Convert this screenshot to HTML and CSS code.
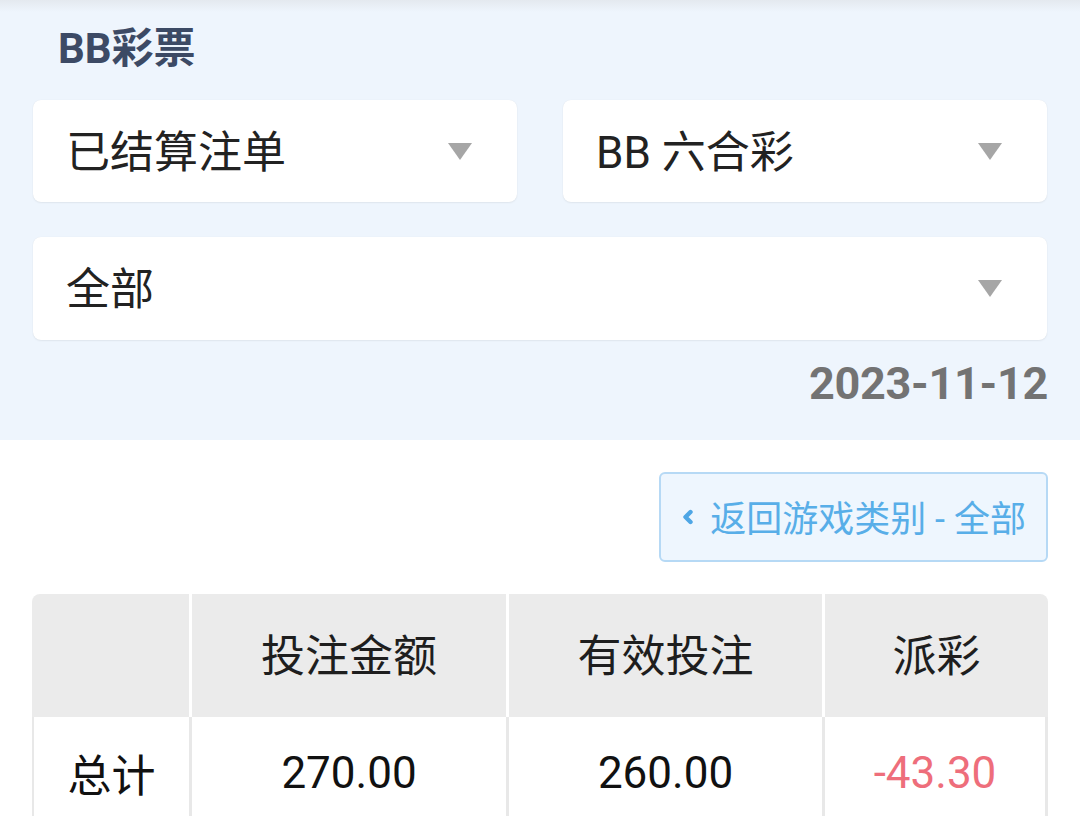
FILE: index.html
```html
<!DOCTYPE html>
<html lang="zh-CN">
<head>
<meta charset="utf-8">
<title>BB彩票</title>
<link rel="stylesheet" href="styles.css">
</head>
<body>
<section class="filters">
  <h1 class="title">BB彩票</h1>
  <div class="select-grid">
    <div class="select"><span>已结算注单</span><i class="caret"></i></div>
    <div class="select"><span>BB 六合彩</span><i class="caret"></i></div>
    <div class="select wide"><span>全部</span><i class="caret"></i></div>
  </div>
  <div class="date">2023-11-12</div>
</section>
<section class="results">
  <div class="back-row">
    <button class="back-btn">
      <svg class="chev" width="12" height="16" viewBox="0 0 12 16"><path d="M8.5 3 L3.5 8 L8.5 13" fill="none" stroke="currentColor" stroke-width="4.4" stroke-linecap="round" stroke-linejoin="round"/></svg>
      <span>返回游戏类别 - 全部</span>
    </button>
  </div>
  <table class="summary">
    <colgroup>
      <col class="c1"><col class="c2"><col class="c3"><col class="c4">
    </colgroup>
    <thead>
      <tr><th></th><th>投注金额</th><th>有效投注</th><th>派彩</th></tr>
    </thead>
    <tbody>
      <tr><td>总计</td><td>270.00</td><td>260.00</td><td class="neg">-43.30</td></tr>
    </tbody>
  </table>
</section>
</body>
</html>
```
FILE: styles.css
```css
html, body {
  margin: 0;
  padding: 0;
  background: #ffffff;
}
body {
  width: 1080px;
  font-family: Roboto, "Noto Sans CJK SC", sans-serif;
  color: #222222;
}
.filters {
  background: linear-gradient(#e4e9ef 0px, #eef5fd 12px, #eef5fd 100%);
  padding: 25px 32px 28px 33px;
}
.title {
  margin: 0 0 27px 25px;
  font-size: 42px;
  line-height: 48px;
  font-weight: 700;
  color: #3c4a65;
}
.select-grid {
  display: grid;
  grid-template-columns: 484px 484px;
  column-gap: 46px;
  row-gap: 35px;
}
.select {
  height: 102px;
  box-sizing: border-box;
  background: #ffffff;
  border-radius: 8px;
  box-shadow: 0 1px 2px rgba(0, 0, 0, 0.06), 0 0 1px rgba(0, 0, 0, 0.08);
  display: flex;
  align-items: center;
  justify-content: space-between;
  padding: 0 45px 0 33px;
  font-size: 44px;
  color: #222222;
}
.select span {
  margin-top: -5px;
}
.select.wide {
  grid-column: 1 / span 2;
  height: 103px;
}
.caret {
  width: 0;
  height: 0;
  border-left: 12px solid transparent;
  border-right: 12px solid transparent;
  border-top: 17px solid #a6a6a6;
}
.date {
  margin-top: 16px;
  text-align: right;
  font-size: 45px;
  line-height: 56px;
  font-weight: 700;
  color: #737373;
  letter-spacing: -0.3px;
}
.results {
  padding: 32px 32px 0 32px;
}
.back-row {
  display: flex;
  justify-content: flex-end;
}
.back-btn {
  height: 90px;
  box-sizing: border-box;
  border: 2px solid #b6d9f5;
  border-radius: 6px;
  background: #eef6fe;
  display: flex;
  align-items: center;
  gap: 16px;
  padding: 0 20px 0 21px;
  font-family: Roboto, "Noto Sans CJK SC", sans-serif;
  font-size: 36px;
  color: #58aee8;
}
.back-btn span {
  margin-top: -3px;
}
.chev {
  color: #4ea6e5;
}
.summary {
  margin-top: 32px;
  width: 1016px;
  border-collapse: separate;
  border-spacing: 0;
  table-layout: fixed;
  font-size: 44px;
}
.c1 { width: 160px; }
.c2 { width: 317px; }
.c3 { width: 316px; }
.c4 { width: 223px; }
.summary th {
  height: 117px;
  background: #ebebeb;
  font-weight: 400;
  color: #1e1e1e;
  text-align: center;
  padding: 0 0 6px 0;
  border-right: 3px solid #ffffff;
}
.summary th:first-child { border-top-left-radius: 8px; }
.summary th:last-child {
  border-right: none;
  border-top-right-radius: 8px;
}
.summary td {
  height: 112px;
  text-align: center;
  padding: 0;
  color: #111111;
  border-right: 3px solid #e8e8e8;
  border-bottom: 3px solid #e8e8e8;
}
.summary td:first-child { border-left: 2px solid #e8e8e8; }
.summary td.neg { color: #ee6e7b; }
```
